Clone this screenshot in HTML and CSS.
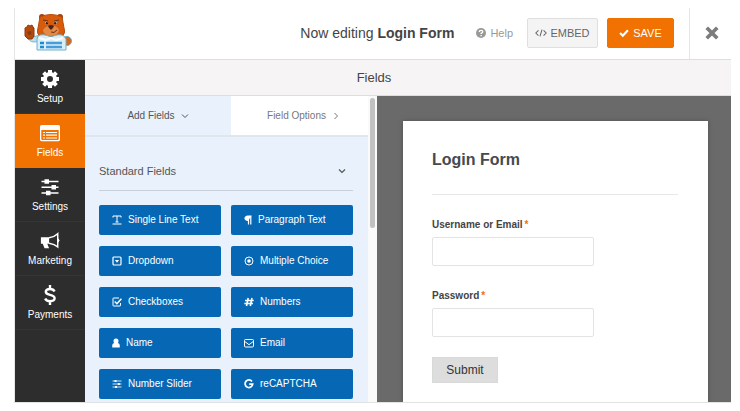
FILE: index.html
```html
<!DOCTYPE html>
<html lang="en">
<head>
<meta charset="utf-8">
<title>Login Form</title>
<link rel="stylesheet" href="styles.css">
</head>
<body>
<div class="builder">
  <header class="topbar">
    <svg class="logo" viewBox="0 0 48 39" aria-hidden="true">
      <path d="M4 24c1 5 5 6 11 4l1-6-7 2z" fill="#b9dfee" stroke="#78b6cf"/>
      <path d="M1 15l2-1 1-2 2 1 2-1 1 2 1 1v8l-2 3H4l-3-3z" fill="#b64a0b" stroke="#8b3b10"/>
      <circle cx="5.500" cy="20" r="2" fill="#8b3b10"/>
      <circle cx="43" cy="28" r="4.500" fill="#d96716" stroke="#6fa9c4"/>
      <circle cx="18" cy="4" r="3" fill="#9e430f"/><circle cx="36" cy="4" r="3" fill="#9e430f"/>
      <path d="M16 4q11-5 22 0l2 11q2 6-3 9H17q-5-3-3-9z" fill="#d75b0a" stroke="#b64b0b"/>
      <path d="M14 23q5-3 13 1 8-4 13-1l2 3v11H13V26z" fill="#d9eff8" stroke="#72afc9"/>
      <path d="M19 17q4-5 8-4 5-1 8 4 0 5-8 6-8-1-8-6z" fill="#e58a45"/>
      <path d="M24 13q3-2 6 0l-1 2-2 2-2-2z" fill="#4c2419"/>
      <circle cx="22.500" cy="10" r="1.500" fill="#f3d6c0"/><circle cx="31.500" cy="10" r="1.500" fill="#f3d6c0"/>
      <circle cx="22.800" cy="10.300" r="1.200" fill="#321d18"/><circle cx="31.200" cy="10.300" r="1.200" fill="#321d18"/>
      <path d="M19 7l5 1M30 8l5-1M27 19q3 2 6-2" fill="none" stroke="#6c3317"/>
      <path d="M15 25l7 2 5-2 5 2 7-2" fill="none" stroke="#fff" stroke-width="2"/>
      <path d="M16 30h4M16 34h4" stroke="#188bd1" stroke-width="2.500"/>
      <path d="M22 30h16M22 34h16" stroke="#4a9bd9" stroke-width="2.500"/>
    </svg>
    <p class="editing">Now editing <strong>Login Form</strong></p>
    <a class="help" href="#help">
      <svg viewBox="0 0 10 10" aria-hidden="true"><circle cx="5" cy="5" r="5" fill="currentColor"/><path d="M3.300 4q0-1.700 1.800-1.700 1.700 0 1.700 1.400 0 1-1.700 1.700v.7M5.100 7v1.200" fill="none" stroke="#fff" stroke-width="1.300"/></svg>
      Help
    </a>
    <button class="btn btn-embed" type="button">
      <svg viewBox="0 0 14 10" aria-hidden="true"><path d="M4 2L1 5l3 3M10 2l3 3-3 3M8.200 1L5.800 9" fill="none" stroke="currentColor" stroke-width="1.200"/></svg>
      EMBED
    </button>
    <button class="btn btn-save" type="button">
      <svg class="tick" viewBox="0 0 11 10" aria-hidden="true"><path d="M1.200 5l3 3 5.600-6" fill="none" stroke="currentColor" stroke-width="2.400"/></svg>
      SAVE
    </button>
    <button class="close" type="button" aria-label="Close">
      <svg viewBox="0 0 14 14" aria-hidden="true"><path d="M3 3l8 8M11 3l-8 8" stroke="currentColor" stroke-width="3.600" stroke-linecap="square"/></svg>
    </button>
  </header>

  <nav class="sidebar">
    <a class="nav-item" href="#setup">
      <svg viewBox="0 0 20 20" aria-hidden="true"><circle cx="10" cy="10" r="5" fill="none" stroke="currentColor" stroke-width="4"/><path d="M10 1v3M10 16v3M1 10h3M16 10h3M3.600 3.600l2.200 2.200M14.200 14.200l2.200 2.200M16.400 3.600l-2.200 2.200M5.800 14.200l-2.200 2.200" stroke="currentColor" stroke-width="4"/></svg>
      Setup
    </a>
    <a class="nav-item active" href="#fields" aria-current="page">
      <svg viewBox="0 0 20 20" aria-hidden="true"><rect x=".6" y="2.600" width="18.800" height="15" rx="1.500" fill="none" stroke="currentColor" stroke-width="1.400"/><path d="M1 3h18v4H1z" fill="currentColor"/><path d="M3 9.500h2M3 12.200h2M3 15h2M6 9.500h11M6 12.200h11M6 15h11" stroke="currentColor" stroke-width="1.200"/></svg>
      Fields
    </a>
    <a class="nav-item" href="#settings">
      <svg viewBox="0 0 20 20" aria-hidden="true"><path d="M1.500 4.500h17M1.500 10.200h17M1.500 16h17" stroke="currentColor" stroke-width="1.600"/><path d="M4.500 2.200h4.500v4.500H4.500zM11.500 8H16v4.500h-4.500zM6 13.800h4.500v4.500H6z" fill="currentColor"/></svg>
      Settings
    </a>
    <a class="nav-item" href="#marketing">
      <svg viewBox="0 0 22 20" aria-hidden="true"><path d="M1 6h9v7H8l2 5H5l-2-5H1z" fill="currentColor"/><path d="M10 6.500q6-1 9.500-4.500v14.500Q16 13.500 10 12.500" fill="none" stroke="currentColor" stroke-width="1.600"/><path d="M20 7.500q2 1.800 0 3.800z" fill="currentColor" stroke="currentColor"/></svg>
      Marketing
    </a>
    <a class="nav-item" href="#payments">
      <svg viewBox="0 0 20 20" aria-hidden="true"><path d="M14.500 6.500Q13.500 4 10 4 5.800 4 5.800 6.800q0 2.200 4.200 3.100 4.600 1 4.600 3.400 0 2.900-4.600 2.900-3.800 0-4.800-2.700M10 0v4M10 16v4" fill="none" stroke="currentColor" stroke-width="2.400"/></svg>
      Payments
    </a>
  </nav>

  <h1 class="section-title">Fields</h1>

  <main class="workspace">
    <section class="panel">
      <div class="panel-body">
        <div class="tabs">
          <button class="tab selected" type="button">Add Fields
            <svg viewBox="0 0 8 8" aria-hidden="true"><path d="M1 2.500l3 3 3-3" fill="none" stroke="currentColor"/></svg>
          </button>
          <button class="tab tab-options" type="button">Field Options
            <svg viewBox="0 0 8 8" aria-hidden="true"><path d="M2.500 1l3 3-3 3" fill="none" stroke="currentColor"/></svg>
          </button>
        </div>
        <h2 class="group-title">Standard Fields
          <svg viewBox="0 0 8 8" aria-hidden="true"><path d="M1 2.500l3 3 3-3" fill="none" stroke="currentColor" stroke-width="1.200"/></svg>
        </h2>
        <div class="field-grid">
          <button class="field" type="button"><svg viewBox="0 0 10 10" aria-hidden="true"><path d="M1 2.500V1h8v1.500M5 1v6M3.500 7h3M.5 9h9" fill="none" stroke="currentColor"/></svg>Single Line Text</button>
          <button class="field" type="button"><svg class="slim" viewBox="0 0 8 10" aria-hidden="true"><path d="M7.800.5H4C1.500.5.5 2 .5 3.300S1.500 6 4 6z" fill="currentColor"/><path d="M4.500 1v8.500M6.800 1v8.500" stroke="currentColor" stroke-width="1.200"/></svg>Paragraph Text</button>
          <button class="field" type="button"><svg viewBox="0 0 10 10" aria-hidden="true"><rect x="1" y="1" width="8" height="8" rx="1" fill="none" stroke="currentColor" stroke-width="1.200"/><path d="M2.900 4h4.200L5 6.700z" fill="currentColor"/></svg>Dropdown</button>
          <button class="field" type="button"><svg viewBox="0 0 10 10" aria-hidden="true"><circle cx="5" cy="5" r="4" fill="none" stroke="currentColor"/><circle cx="5" cy="5" r="1.800" fill="currentColor"/></svg>Multiple Choice</button>
          <button class="field" type="button"><svg viewBox="0 0 10 10" aria-hidden="true"><path d="M8.500 6v2.500q0 .5-.5.500H1.500q-.5 0-.5-.5v-7Q1 1 1.500 1H7" fill="none" stroke="currentColor"/><path d="M2.700 4.500l2.200 2.200 4.500-5" fill="none" stroke="currentColor" stroke-width="1.500"/></svg>Checkboxes</button>
          <button class="field" type="button"><svg viewBox="0 0 10 10" aria-hidden="true"><path d="M4.200 1L2.500 9M8 1L6.300 9M1 3.500h8.700M.4 6.500H9" fill="none" stroke="currentColor" stroke-width="1.600"/></svg>Numbers</button>
          <button class="field" type="button"><svg class="slim" viewBox="0 0 8 10" aria-hidden="true"><circle cx="4" cy="3" r="2.500" fill="currentColor"/><path d="M.3 9.500q-.6-4.500 2.400-4.500h2.600q3 0 2.400 4.500z" fill="currentColor"/></svg>Name</button>
          <button class="field" type="button"><svg viewBox="0 0 10 10" aria-hidden="true"><rect x=".5" y="1.500" width="9" height="7.500" rx="1" fill="none" stroke="currentColor"/><path d="M.8 3.500L5 6.700l4.200-3.200" fill="none" stroke="currentColor"/></svg>Email</button>
          <button class="field" type="button"><svg viewBox="0 0 10 10" aria-hidden="true"><path d="M.5 2h9M.5 5h9M.5 8h9" stroke="currentColor" stroke-width=".8"/><path d="M2.500 1h2v2h-2zM5.800 4h2v2h-2zM3 7h2v2H3z" fill="currentColor"/></svg>Number Slider</button>
          <button class="field" type="button"><svg viewBox="0 0 10 10" aria-hidden="true"><path d="M8 2.500A3.800 3.800 0 1 0 8.700 5.200H5.200" fill="none" stroke="currentColor" stroke-width="1.700"/></svg>reCAPTCHA</button>
        </div>
      </div>
      <div class="scroll-track"><div class="scroll-thumb"></div></div>
    </section>

    <section class="preview">
      <form class="form-card">
        <h2 class="form-title">Login Form</h2>
        <label class="form-label" for="user">Username or Email<span class="required">*</span></label>
        <input class="form-input" id="user" type="text">
        <label class="form-label" for="pass">Password<span class="required">*</span></label>
        <input class="form-input" id="pass" type="password">
        <button class="submit" type="button">Submit</button>
      </form>
    </section>
  </main>
</div>
</body>
</html>
```
FILE: styles.css
```css
* { box-sizing: border-box; }

body {
  margin: 0;
  padding: 8px 9px 8px 14px;
  height: 100vh;
  background: #fff;
  color: #444;
  font: 10px/12px "Liberation Sans", Arial, sans-serif;
}

button, input { font: inherit; color: inherit; }
button { cursor: pointer; }
a { color: inherit; text-decoration: none; }
h1, h2, p { margin: 0; font-weight: 400; }
svg { display: block; flex: none; }

.builder {
  display: grid;
  grid-template: 52px 36px minmax(0, 1fr) / 70px minmax(0, 1fr);
  height: 100%;
  border-left: 1px solid #e6e6e6;
  border-bottom: 1px solid #e2e2e2;
}

.topbar {
  grid-column: 1 / -1;
  display: flex;
  align-items: center;
  padding: 0 0 2px 9px;
  border-bottom: 1px solid #dedede;
}
.logo { width: 48px; height: 39px; }
.editing {
  margin-left: auto;
  font-size: 14px;
  line-height: 18px;
  white-space: nowrap;
}
.help {
  display: flex;
  align-items: center;
  gap: 4px;
  margin: 0 14px 0 22px;
  color: #999;
  font-size: 11px;
}
.help svg { width: 10px; height: 10px; }
.btn {
  display: flex;
  align-items: center;
  justify-content: center;
  height: 30px;
  padding: 0;
  border: 1px solid #dfdfdf;
  border-radius: 2px;
  font-size: 11px;
}
.btn svg { width: 12px; height: 10px; }
.btn-embed {
  gap: 3px;
  width: 71px;
  margin-right: 9px;
  background: #f5f4f5;
  color: #666;
}
.btn-save {
  gap: 4px;
  width: 67px;
  border-color: #f17200;
  background: #f17200;
  color: #fff;
}
.btn .tick { width: 10px; }
.close {
  display: grid;
  place-items: center;
  align-self: stretch;
  width: 42px;
  margin: 0 0 -2px 15px;
  padding: 0 0 2px 3px;
  border: 0;
  border-left: 1px solid #e6e6e6;
  background: none;
  color: #7c7c7c;
}
.close svg { width: 14px; height: 14px; }

.sidebar {
  grid-row: 2 / 4;
  background: #2d2d2d;
  color: #fff;
}
.nav-item {
  display: flex;
  flex-direction: column;
  align-items: center;
  gap: 4px;
  height: 54px;
  padding-top: 9px;
  border-bottom: 1px solid #353535;
}
.nav-item svg { width: 20px; height: 20px; }
.nav-item.active { background: #f17200; border-color: #f17200; }

.section-title {
  display: grid;
  place-items: center;
  padding-right: 68px;
  border-bottom: 1px solid #dedede;
  background: #f6f4f5;
  font-size: 13px;
  line-height: 16px;
}

.workspace {
  display: grid;
  grid-template-columns: 292fr 354fr;
  min-height: 0;
  overflow: hidden;
}
.panel {
  display: flex;
  min-width: 0;
  overflow: hidden;
  background: #e9f1fc;
}
.panel-body { flex: 1; }
.tabs {
  display: grid;
  grid-template-columns: 146fr 137fr;
  height: 41px;
  border-bottom: 2px solid #dfe6ee;
}
.tab {
  display: flex;
  align-items: center;
  justify-content: center;
  gap: 6px;
  padding: 0;
  border: 0;
  background: #fff;
  color: #777;
}
.tab-options { padding-left: 8px; }
.tab.selected { background: #e9f1fc; color: #555; }
.tab svg { width: 8px; height: 8px; }
.group-title {
  display: flex;
  align-items: center;
  justify-content: space-between;
  height: 54px;
  margin: 0 15px 14px 14px;
  padding: 14px 7px 0 0;
  border-bottom: 1px solid #c8cfd8;
  font-size: 11px;
  color: #555;
}
.group-title svg { width: 8px; height: 8px; }
.field-grid {
  display: grid;
  grid-template-columns: 1fr 1fr;
  gap: 11px 10px;
  margin: 0 15px 0 14px;
}
.field {
  display: flex;
  align-items: center;
  gap: 6px;
  height: 30px;
  padding: 0 0 0 13px;
  border: 0;
  border-radius: 2px;
  background: #0668b5;
  color: #fff;
  white-space: nowrap;
}
.field svg { width: 10px; height: 10px; }
.field .slim { width: 8px; }
.scroll-track {
  width: 9px;
  padding: 2px;
  background: #fafafa;
}
.scroll-thumb {
  height: 130px;
  border-radius: 3px;
  background: #c1c1c1;
}

.preview {
  display: flex;
  padding: 25px 23px 0 26px;
  background: #6a6a6a;
}
.form-card {
  flex: 1;
  padding: 27px 30px 0 29px;
  background: #fff;
  box-shadow: 0 0 4px #505050;
}
.form-title {
  height: 47px;
  margin-bottom: 24px;
  border-bottom: 1px solid #e8e8e8;
  color: #444a50;
  font-size: 16px;
  font-weight: 700;
  line-height: 24px;
}
.form-label {
  display: block;
  margin-bottom: 6px;
  font-weight: 700;
}
.required { margin-left: 2px; color: #f17200; }
.form-input {
  display: block;
  width: 66%;
  height: 29px;
  margin-bottom: 24px;
  border: 1px solid #e3e3e3;
  border-radius: 2px;
  background: #fff;
}
.submit {
  display: block;
  width: 66px;
  height: 26px;
  margin-top: -4px;
  padding: 0;
  border: 1px solid #d9d9d9;
  background: #ddd;
  color: #333;
  font-size: 12px;
}
```
